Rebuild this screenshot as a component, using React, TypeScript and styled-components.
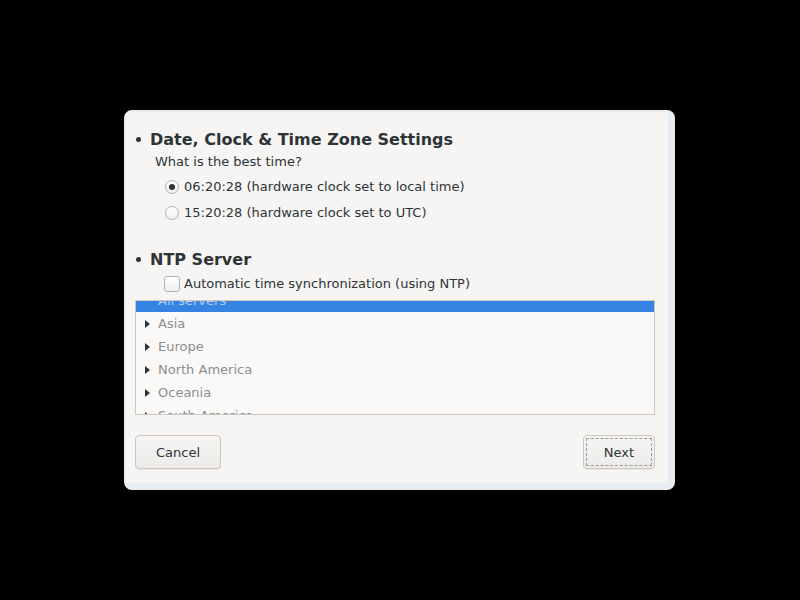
import { createGlobalStyle } from "styled-components";
import styled from "styled-components";

const GlobalStyle = createGlobalStyle`
  html, body {
    margin: 0;
    padding: 0;
    background: #000;
    width: 800px;
    height: 600px;
    overflow: hidden;
  }
  body {
    font-family: "DejaVu Sans", "Noto Sans", sans-serif;
  }
`;

const Screen = styled.div`
  width: 800px;
  height: 600px;
  box-sizing: border-box;
  padding: 110px 0 0 124px;
`;

const Window = styled.div`
  width: 551px;
  height: 380px;
  box-sizing: border-box;
  background: #f6f5f4;
  border: 2px solid #e8edf3;
  border-right-width: 7px;
  border-bottom-width: 7px;
  border-radius: 8px;
  padding: 17px 13px 14px 9px;
  display: flex;
  flex-direction: column;
  color: #2e3436;
`;

const Heading = styled.div`
  font-weight: bold;
  font-size: 16px;
  line-height: 22px;
  display: flex;
  align-items: center;
  gap: 9px;
  margin-left: 1px;
`;

const Bullet = styled.span`
  width: 5px;
  height: 5px;
  margin-bottom: 2px;
  border-radius: 50%;
  background: #2e3436;
  display: inline-block;
`;

const Sub = styled.div`
  font-size: 13px;
  line-height: 18px;
  margin: 2px 0 0 20px;
`;

const Options = styled.div`
  display: flex;
  flex-direction: column;
  gap: 8px;
  margin: 7px 0 0 30px;
`;

const Option = styled.label`
  display: flex;
  align-items: center;
  gap: 5px;
  font-size: 13px;
  line-height: 18px;
`;

const CheckOption = styled(Option)`
  margin: 4px 0 0 29px;
  gap: 4px;
`;

const Radio = styled.span<{ $checked?: boolean }>`
  width: 14px;
  height: 14px;
  box-sizing: border-box;
  border-radius: 50%;
  border: 1px solid #b6b2ad;
  background: linear-gradient(#ffffff, #f0efed);
  display: flex;
  align-items: center;
  justify-content: center;
  &::after {
    content: "";
    width: 6px;
    height: 6px;
    border-radius: 50%;
    background: ${(p) => (p.$checked ? "#2e3436" : "transparent")};
  }
`;

const Check = styled.span`
  width: 16px;
  height: 16px;
  box-sizing: border-box;
  border-radius: 3px;
  border: 1px solid #b6b2ad;
  background: linear-gradient(#ffffff, #f0efed);
`;

const Section = styled.div<{ $gap: number }>`
  margin-top: ${(p) => p.$gap}px;
  display: flex;
  flex-direction: column;
`;

const ListBox = styled.div`
  margin-top: 7px;
  height: 115px;
  box-sizing: border-box;
  border: 1px solid #cdc7c2;
  background: #faf9f8;
  overflow: hidden;
`;

const ListInner = styled.div`
  margin-top: -12px;
`;

const Row = styled.div<{ $selected?: boolean }>`
  height: 23px;
  display: flex;
  align-items: center;
  font-size: 13px;
  padding-left: 9px;
  gap: 8px;
  background: ${(p) => (p.$selected ? "#3584e4" : "transparent")};
  color: ${(p) => (p.$selected ? "#b3cff2" : "#8b8e8f")};
`;

const Expander = styled.span<{ $invisible?: boolean }>`
  width: 0;
  height: 0;
  border-top: 4px solid transparent;
  border-bottom: 4px solid transparent;
  border-left: 5px solid ${(p) => (p.$invisible ? "transparent" : "#2e3436")};
`;

const Separator = styled.div`
  margin-top: 15px;
  height: 1px;
  background: #dcd9d5;
`;

const Actions = styled.div`
  margin-top: 5px;
  display: flex;
  justify-content: space-between;
`;

const Button = styled.button<{ $width: number; $focused?: boolean }>`
  width: ${(p) => p.$width}px;
  height: 34px;
  box-sizing: border-box;
  border: 1px solid #cdc7c2;
  border-radius: 4px;
  background: linear-gradient(#f6f5f4, #edebe9);
  box-shadow: 0 1px rgba(0, 0, 0, 0.05);
  font-family: "DejaVu Sans", sans-serif;
  font-size: 13px;
  color: #2e3436;
  padding: 0;
  outline: ${(p) => (p.$focused ? "1px dashed #9a9996" : "none")};
  outline-offset: -4px;
`;

const regions = ["Asia", "Europe", "North America", "Oceania", "South America"];

export default function App() {
  return (
    <>
      <GlobalStyle />
      <Screen>
        <Window>
          <Heading>
            <Bullet />
            Date, Clock &amp; Time Zone Settings
          </Heading>
          <Sub>What is the best time?</Sub>
          <Options>
            <Option>
              <Radio $checked />
              06:20:28 (hardware clock set to local time)
            </Option>
            <Option>
              <Radio />
              15:20:28 (hardware clock set to UTC)
            </Option>
          </Options>
          <Section $gap={27}>
            <Heading>
              <Bullet />
              NTP Server
            </Heading>
            <CheckOption>
              <Check />
              Automatic time synchronization (using NTP)
            </CheckOption>
            <ListBox>
              <ListInner>
                <Row $selected>
                  <Expander $invisible />
                  All servers
                </Row>
                {regions.map((r) => (
                  <Row key={r}>
                    <Expander />
                    {r}
                  </Row>
                ))}
              </ListInner>
            </ListBox>
          </Section>
          <Separator />
          <Actions>
            <Button $width={86}>Cancel</Button>
            <Button $width={72} $focused>
              Next
            </Button>
          </Actions>
        </Window>
      </Screen>
    </>
  );
}
